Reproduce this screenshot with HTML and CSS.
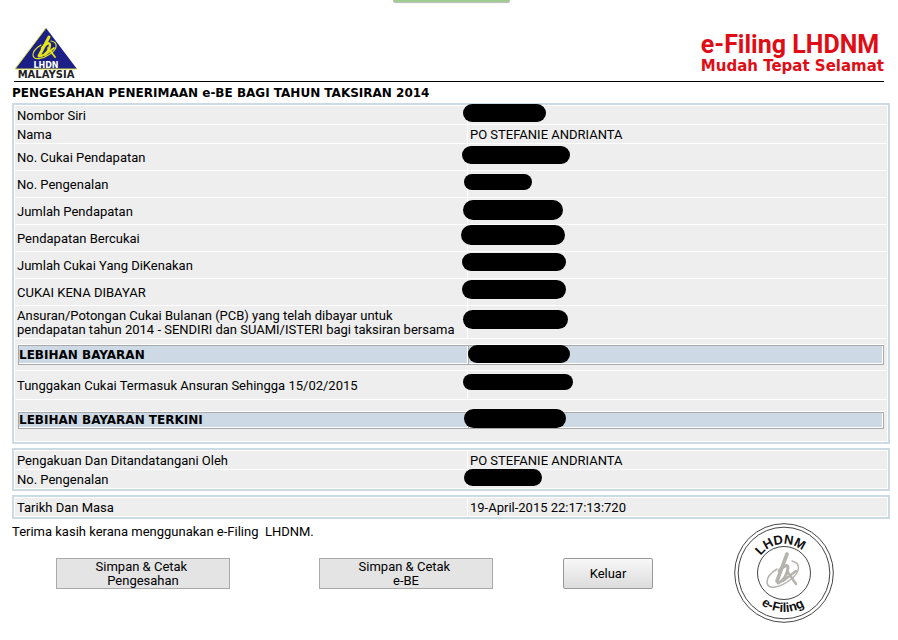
FILE: index.html
```
<!DOCTYPE html>
<html lang="ms">
<head>
  <meta charset="UTF-8" />
  <meta name="viewport" content="width=device-width, initial-scale=1.0" />
  <title>e-Filing LHDNM</title>
  <link rel="stylesheet" href="styles.css">
</head>
<body>

<div class="top-tab"></div>

<header class="header">
  <svg class="logo" width="64" height="52" viewBox="0 0 64 52" role="img" aria-label="LHDN Malaysia">
    <path d="M32 0 L63 41 L1 41 Z" fill="#1b1f86" />
    <path d="M32 0 L1 41 H63" fill="none" stroke="#d6dc3a" stroke-width="1" />
    <g fill="none" stroke="#e6e619" stroke-linecap="round" stroke-linejoin="round">
      <path d="M35 9 L25 28" stroke-width="3" />
      <path d="M28 20 C32 15 36 14 36 17 C36 21 32 27 27 28" stroke-width="2.4" />
      <path d="M34 20 L41 29 M40 20 L31 27" stroke-width="1.8" />
      <path d="M37 13 C44 14 44 21 36 26 C29 31 19 33 19 27 C19 23 22 20 27 17" stroke-width="1.2" />
    </g>
    <text class="logo-name" x="32" y="40" text-anchor="middle">LHDN</text>
    <text class="logo-country" x="32" y="50" text-anchor="middle">MALAYSIA</text>
  </svg>
  <div class="brand">
    <div class="brand-name">e-Filing LHDNM</div>
    <div class="brand-slogan">Mudah Tepat Selamat</div>
  </div>
</header>

<main>
  <h1>PENGESAHAN PENERIMAAN e-BE BAGI TAHUN TAKSIRAN 2014</h1>

  <table class="panel">
    <tr><th scope="row">Nombor Siri</th><td><span class="mask mask-siri"></span></td></tr>
    <tr><th scope="row">Nama</th><td>PO STEFANIE ANDRIANTA</td></tr>
    <tr class="tall"><th scope="row">No. Cukai Pendapatan</th><td><span class="mask mask-cukai"></span></td></tr>
    <tr class="tall"><th scope="row">No. Pengenalan</th><td><span class="mask mask-kp"></span></td></tr>
    <tr class="tall"><th scope="row">Jumlah Pendapatan</th><td><span class="mask mask-jumlah"></span></td></tr>
    <tr class="tall"><th scope="row">Pendapatan Bercukai</th><td><span class="mask mask-bercukai"></span></td></tr>
    <tr class="tall"><th scope="row">Jumlah Cukai Yang DiKenakan</th><td><span class="mask mask-dikenakan"></span></td></tr>
    <tr class="tall"><th scope="row">CUKAI KENA DIBAYAR</th><td><span class="mask mask-dibayar"></span></td></tr>
    <tr class="double"><th scope="row">Ansuran/Potongan Cukai Bulanan (PCB) yang telah dibayar untuk<br>pendapatan tahun 2014 - SENDIRI dan SUAMI/ISTERI bagi taksiran bersama</th><td><span class="mask mask-pcb"></span></td></tr>
    <tr class="total">
      <td colspan="2">
        <div class="bar"><div class="bar-label">LEBIHAN BAYARAN</div><div class="bar-value"><span class="mask mask-lebihan"></span></div></div>
      </td>
    </tr>
    <tr class="arrears"><th scope="row">Tunggakan Cukai Termasuk Ansuran Sehingga 15/02/2015</th><td><span class="mask mask-tunggakan"></span></td></tr>
    <tr class="total-last">
      <td colspan="2">
        <div class="bar bar-slim"><div class="bar-label">LEBIHAN BAYARAN TERKINI</div><div class="bar-value"><span class="mask mask-terkini"></span></div></div>
      </td>
    </tr>
  </table>

  <table class="panel">
    <tr><th scope="row">Pengakuan Dan Ditandatangani Oleh</th><td>PO STEFANIE ANDRIANTA</td></tr>
    <tr><th scope="row">No. Pengenalan</th><td><span class="mask mask-pengenalan"></span></td></tr>
  </table>

  <table class="panel">
    <tr><th scope="row">Tarikh Dan Masa</th><td>19-April-2015 22:17:13:720</td></tr>
  </table>
</main>

<footer class="footer">
  <div class="actions">
    <p>Terima kasih kerana menggunakan e-Filing&nbsp; LHDNM.</p>
    <div class="buttons">
      <button type="button" class="btn-print">Simpan &amp; Cetak&nbsp;<br>Pengesahan</button>
      <button type="button" class="btn-print">Simpan &amp; Cetak&nbsp;<br>e-BE</button>
      <button type="button" class="btn-exit">Keluar</button>
    </div>
  </div>
  <svg class="stamp" width="100" height="100" viewBox="0 0 100 100" role="img" aria-label="LHDNM e-Filing">
    <defs>
      <path id="arc-top" d="M21 50 A29 29 0 0 1 79 50" />
      <path id="arc-bottom" d="M11 50 A39 39 0 0 0 89 50" />
    </defs>
    <g fill="none" stroke="#444">
      <circle cx="50" cy="50" r="49.3" />
      <circle cx="50" cy="50" r="45.8" />
      <circle cx="50" cy="50" r="26.5" />
    </g>
    <text class="stamp-text" text-anchor="middle"><textPath href="#arc-top" startOffset="46%">LHDNM</textPath></text>
    <text class="stamp-text" text-anchor="middle"><textPath href="#arc-bottom" startOffset="49%">e-Filing</textPath></text>
    <g fill="none" stroke="#b5b3ad" stroke-linecap="round" stroke-linejoin="round">
      <path d="M53 31 L43 58" stroke-width="3.6" />
      <path d="M45 48 C49 43 54 41 54 44 C54 50 50 58 44 60" stroke-width="3" />
      <path d="M53 48 L62 61 M62 48 L49 58" stroke-width="2.4" />
      <path d="M58 38 C67 40 67 49 56 57 C47 64 33 68 33 59 C33 53 38 49 43 46" stroke-width="1.5" />
    </g>
  </svg>
</footer>

</body>
</html>
```
FILE: styles.css
```
body {
  font-family: Roboto, Tahoma, sans-serif;
  font-size: 13px;
  line-height: 14px;
  color: #000;
  background: #fff;
  margin: 0;
  padding: 0 8px 0 12px;
}
.top-tab {
  width: 117px;
  height: 2px;
  margin: 0 auto 1px;
  background: #a0cc90;
  border-radius: 0 0 3px 3px;
  box-shadow: 0 1px 1px #bbb;
}
.header {
  display: flex;
  justify-content: space-between;
  align-items: flex-end;
  height: 78px;
  margin: 0 6px 0 2px;
  border-bottom: 1px solid #000;
}
.logo {
  display: block;
  margin-bottom: 1px;
}
.logo-name {
  font: bold 8px 'DejaVu Sans', sans-serif;
  fill: #fff;
}
.logo-country {
  font: bold 10px 'DejaVu Sans', sans-serif;
  fill: #222;
}
.brand {
  color: #e00d16;
  font-weight: bold;
  padding-bottom: 6px;
}
.brand-name {
  font-size: 25px;
  line-height: 24px;
}
.brand-slogan {
  font-family: 'DejaVu Sans', sans-serif;
  font-size: 15px;
  line-height: 18px;
}
h1, .bar {
  font-family: 'DejaVu Sans', Verdana, sans-serif;
  font-size: 12px;
  font-weight: bold;
}
h1 {
  line-height: 14px;
  margin: 4px 0 3px;
}
.panel {
  width: 100%;
  table-layout: fixed;
  border: 2px solid #ccdae4;
  border-spacing: 1px;
  margin-bottom: 4px;
}
.panel th, .panel td {
  position: relative;
  height: 18px;
  padding: 2px 2px 0;
  box-sizing: border-box;
  background: #eee;
  font-weight: normal;
  text-align: left;
  white-space: nowrap;
}
.panel th {
  width: 452px;
}
.panel .tall th { height: 26px; }
.panel .double th { height: 32px; }
.panel .total td { height: 31px; padding-top: 0; }
.panel .arrears th { height: 28px; }
.panel .total-last td { height: 41px; padding-top: 0; }
.bar {
  display: flex;
  height: 20px;
  line-height: 18px;
  box-sizing: border-box;
  margin: 0 1px;
  border: 1px solid #a9a9a9;
  background: #cdd9e4;
  box-shadow: 0 -1px #fff, inset -1px -1px #fff;
}
.bar-slim {
  height: 17px;
  line-height: 15px;
}
.bar-label {
  width: 449px;
  box-sizing: border-box;
  border-right: 1px solid #fff;
}
.bar-value {
  position: relative;
  flex: 1;
  border-left: 1px solid #a9a9a9;
}
/* blacked-out values, laid over the cells */
.mask {
  position: absolute;
  left: -5px;
  top: 2px;
  width: 104px;
  height: 18px;
  border-radius: 10px;
  background: #000;
}
.mask-siri { top: -2px; width: 83px; }
.mask-cukai { left: -6px; width: 108px; }
.mask-kp { left: -4px; top: 3px; width: 68px; height: 16px; }
.mask-jumlah { width: 100px; height: 20px; }
.mask-bercukai { left: -7px; top: 0; height: 20px; }
.mask-dikenakan { left: -6px; top: 1px; }
.mask-dibayar { left: -6px; top: 1px; height: 19px; }
.mask-pcb { top: 4px; width: 105px; height: 19px; }
.mask-lebihan { left: -1px; top: -1px; width: 102px; }
.mask-tunggakan { top: 3px; width: 110px; height: 16px; }
.mask-terkini { left: -5px; top: -4px; width: 102px; height: 19px; }
.mask-pengenalan { left: -4px; top: -1px; width: 78px; height: 17px; }
.footer {
  display: flex;
  justify-content: space-between;
  margin-right: 56px;
}
.actions p {
  margin: 2px 0 19px;
}
.buttons {
  display: flex;
  padding-left: 44px;
}
button {
  height: 31px;
  padding: 0;
  font-family: inherit;
  font-size: 13px;
  line-height: 14px;
  color: #000;
  cursor: pointer;
}
.btn-print {
  width: 174px;
  margin-right: 89px;
  background: #e4e4e4;
  border: 1px solid #a9a9a9;
}
.btn-exit {
  width: 90px;
  margin-left: -19px;
  background: linear-gradient(#f8f8f8, #dcdcdc);
  border: 1px solid #999;
  border-radius: 2px;
}
.stamp {
  display: block;
  flex-shrink: 0;
}
.stamp-text {
  font: bold 13px 'Liberation Sans', Arial, sans-serif;
  fill: #111;
}
```
